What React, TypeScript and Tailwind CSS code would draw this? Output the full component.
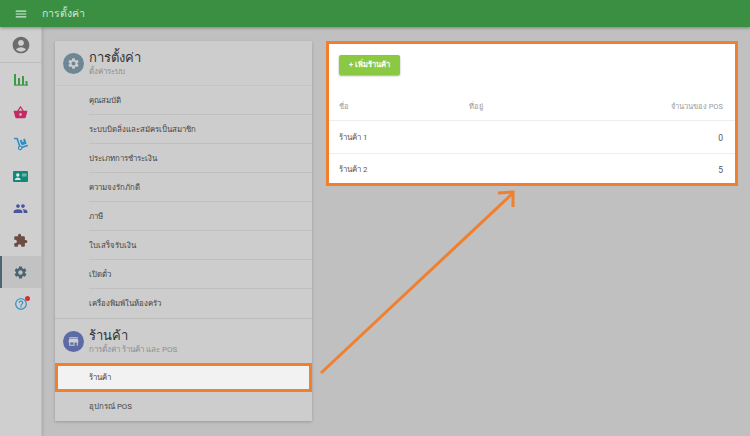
import { MdAccountCircle, MdExtension, MdHelpOutline, MdMenu, MdPeople, MdSettings, MdShoppingBasket, MdStore } from "react-icons/md";
import { FaDolly } from "react-icons/fa";

const font = { fontFamily: '"Roboto", "Noto Sans", sans-serif' };

const settingsRows = [
  "คุณสมบัติ",
  "ระบบบิดลิ่งและสมัครเป็นสมาชิก",
  "ประเภทการชำระเงิน",
  "ความจงรักภักดี",
  "ภาษี",
  "ใบเสร็จรับเงิน",
  "เปิดตั๋ว",
  "เครื่องพิมพ์ในห้องครัว",
];

function BarsIcon() {
  return (
    <svg width="14" height="12" viewBox="0 0 14 12" fill="#3f9a46">
      <rect x="0" y="0" width="2" height="11" />
      <rect x="4" y="4" width="2" height="7" />
      <rect x="8" y="2" width="2" height="9" />
      <rect x="11.5" y="7" width="2" height="4" />
      <rect x="0" y="10.5" width="14" height="1.2" />
    </svg>
  );
}

function CardIcon() {
  return (
    <svg width="15" height="11" viewBox="0 0 15 11">
      <rect width="15" height="11" rx="1" fill="#0f8a7a" />
      <circle cx="4.8" cy="4" r="1.7" fill="#dfe8e6" />
      <path d="M1.8 9c0-1.8 1.6-2.6 3-2.6s3 .8 3 2.6z" fill="#dfe8e6" />
      <rect x="9" y="2.5" width="4.5" height="3" fill="#6fb5ab" />
    </svg>
  );
}

function SideItem({ children, active }: { children: React.ReactNode; active?: boolean }) {
  return (
    <div className={`h-8 flex items-center justify-center border-l-2 ${active ? "border-[#4a6472] bg-[#c2c2c2]" : "border-transparent"}`}>
      <div className="-ml-0.5 flex items-center justify-center">{children}</div>
    </div>
  );
}

function SectionHead({ title, sub, icon, bg }: { title: string; sub: string; icon: React.ReactNode; bg: string }) {
  return (
    <div className="flex items-center gap-[5px] pl-2 h-[44px]">
      <div className="w-[21px] h-[21px] rounded-full flex items-center justify-center" style={{ backgroundColor: bg }}>
        {icon}
      </div>
      <div className="flex flex-col">
        <span className="text-[13px] leading-[18px] text-[#333]">{title}</span>
        <span className="text-[8px] leading-[10px] text-[#8f8f8f]">{sub}</span>
      </div>
    </div>
  );
}

export default function App() {
  return (
    <div className="relative w-[750px] h-[436px] overflow-hidden flex flex-col bg-[#c0c0c0]" style={font}>
      {/* Top bar */}
      <div className="h-[27px] shrink-0 bg-[#3a8f42] flex items-center pl-[14px] gap-[8px] shadow-[0_1px_3px_rgba(0,0,0,0.35)] z-10">
        <MdMenu size={14} color="#d4e6d5" />
        <span className="ml-[6px] text-[10.5px] text-[#d8e8d9]">การตั้งค่า</span>
      </div>

      <div className="flex flex-1 min-h-0">
        {/* Sidebar */}
        <div className="w-[42px] shrink-0 bg-[#cfcfcf] border-r border-[#bcbcbc] flex flex-col shadow-[1px_0_3px_rgba(0,0,0,0.12)]">
          <div className="h-[36px] flex items-center justify-center border-b border-[#bdbdbd]">
            <MdAccountCircle size={20} color="#6c6c6c" />
          </div>
          <div className="flex flex-col pt-[1px]">
            <SideItem><BarsIcon /></SideItem>
            <SideItem><MdShoppingBasket size={15} color="#c52a63" /></SideItem>
            <SideItem><FaDolly size={14} color="#2b8fc4" /></SideItem>
            <SideItem><CardIcon /></SideItem>
            <SideItem><MdPeople size={15} color="#4a55a2" /></SideItem>
            <SideItem><MdExtension size={15} color="#6d4c41" /></SideItem>
            <SideItem active><MdSettings size={15} color="#4a6472" /></SideItem>
            <SideItem>
              <div className="relative">
                <MdHelpOutline size={14} color="#2b8fc4" />
                <span className="absolute -top-[1px] -right-[2px] w-[5px] h-[5px] rounded-full bg-[#d32f2f]" />
              </div>
            </SideItem>
          </div>
        </div>

        {/* Content */}
        <div className="flex-1 flex items-start pl-[13px] pt-[14px] gap-[14px]">
          {/* Settings list */}
          <div className="w-[257px] bg-[#cdcdcd] shadow-[0_1px_3px_rgba(0,0,0,0.2)]">
            <SectionHead
              title="การตั้งค่า"
              sub="ตั้งค่าระบบ"
              bg="#6f8795"
              icon={<MdSettings size={13} color="#cdcdcd" />}
            />
            <div className="border-t border-[#c4c4c4]">
              {settingsRows.map((r, i) => (
                <div key={r} className="h-[29px] ml-[34px]">
                  <div className={`h-full flex items-center pt-[1px] text-[7.8px] text-[#444] ${i < settingsRows.length - 1 ? "border-b border-[#c0c0c0]" : ""}`}>
                    {r}
                  </div>
                </div>
              ))}
            </div>
            <div className="border-t border-[#bcbcbc]">
              <SectionHead
                title="ร้านค้า"
                sub="การตั้งค่า ร้านค้า และ POS"
                bg="#5c6aa6"
                icon={<MdStore size={13} color="#cdcdcd" />}
              />
            </div>
            <div className="h-[29px] border-[3px] border-[#f08030] bg-[#f2f2f2] flex items-center pl-[31px] text-[7.8px] text-[#444]">
              ร้านค้า
            </div>
            <div className="h-[29px] flex items-center pl-[34px] text-[7.8px] text-[#444]">อุปกรณ์ POS</div>
          </div>

          {/* Shops card */}
          <div className="w-[412px] h-[145px] border-[3px] border-[#f08030] bg-white flex flex-col">
            <div className="h-[52px] pl-[10px] pt-[11px] shrink-0">
              <div className="w-[61px] h-[20px] rounded-[2px] bg-[#8bc943] shadow-[0_1px_2px_rgba(0,0,0,0.35)] flex items-center justify-center text-[7.5px] font-bold text-white">
                + เพิ่มร้านค้า
              </div>
            </div>
            <div className="h-[25px] shrink-0 pl-[10px] pr-[12px] pb-[2px] flex items-center text-[7.5px] text-[#999] border-b border-[#eeeeee]">
              <span className="w-[130px]">ชื่อ</span>
              <span className="flex-1">ที่อยู่</span>
              <span>จำนวนของ POS</span>
            </div>
            <div className="h-[33px] shrink-0 pl-[10px] pr-[12px] pt-[2px] flex items-center justify-between text-[7.8px] text-[#555] border-b border-[#eeeeee]">
              <span>ร้านค้า 1</span>
              <span className="text-[8.5px]">0</span>
            </div>
            <div className="flex-1 pl-[10px] pr-[12px] pt-[3px] flex items-center justify-between text-[7.8px] text-[#555]">
              <span>ร้านค้า 2</span>
              <span className="text-[8.5px]">5</span>
            </div>
          </div>
        </div>
      </div>

      {/* Callout arrow */}
      <svg className="absolute left-0 top-0 pointer-events-none" width="750" height="436" viewBox="0 0 750 436" fill="none">
        <path d="M321 373 L512 194 M498 193 L513 192 L513 207" stroke="#f08030" strokeWidth="3" />
      </svg>
    </div>
  );
}
